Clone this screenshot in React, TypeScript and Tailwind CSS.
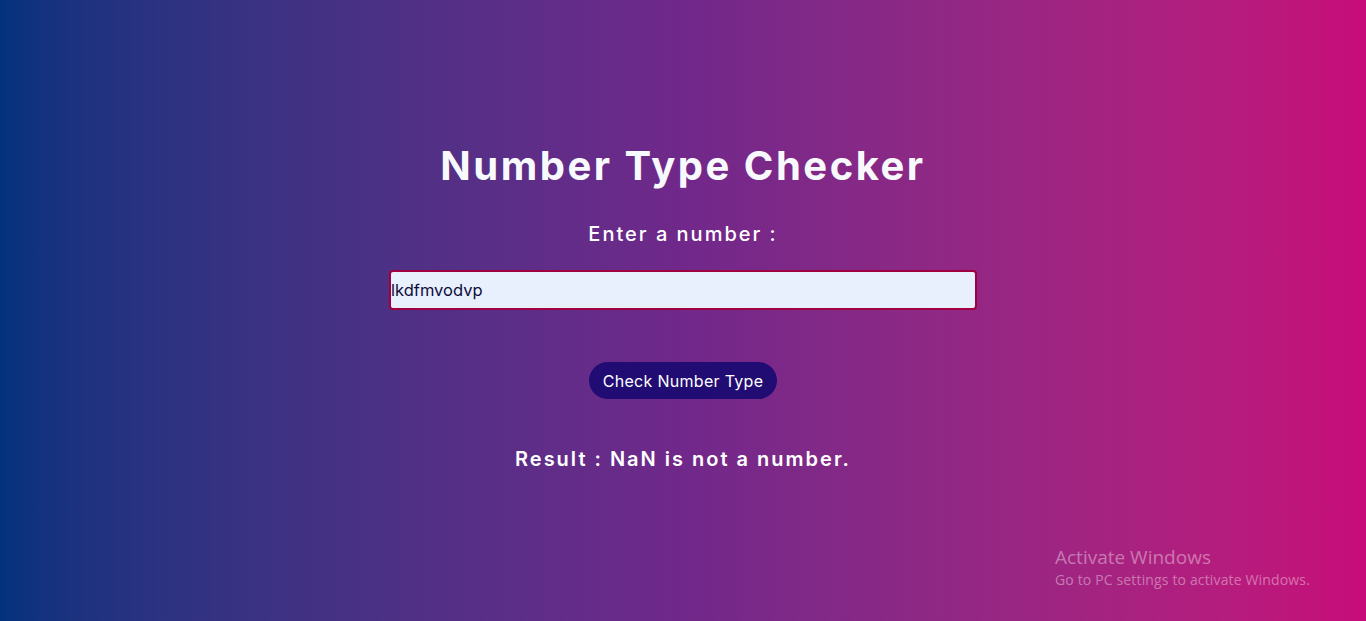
import { useState } from "react";

export default function App() {
  const [value, setValue] = useState("lkdfmvodvp");
  const [result, setResult] = useState("NaN is not a number.");

  const check = () => {
    const n = Number(value);
    if (value.trim() === "" || Number.isNaN(n)) {
      setResult("NaN is not a number.");
    } else if (Number.isInteger(n)) {
      setResult(`${n} is an integer.`);
    } else {
      setResult(`${n} is a decimal number.`);
    }
  };

  return (
    <main className="relative flex min-h-[621px] flex-col items-center bg-gradient-to-r from-[#03327e] via-[#70288a] to-[#c70b79] font-['Inter','Noto_Sans',sans-serif] text-white">
      <h1 className="mt-[142px] text-[40px] font-bold leading-[48px] tracking-[2.5px] text-[#f8f9fc]">
        Number Type Checker
      </h1>

      <label htmlFor="num" className="mt-[30px] text-[20px] font-medium leading-[28px] tracking-[2px]">
        Enter a number :
      </label>

      <input
        id="num"
        value={value}
        onChange={(e) => setValue(e.target.value)}
        className="mt-[22px] h-[40px] w-[588px] rounded-[4px] border-2 border-[#a0003f] bg-[#e8f0fe] px-0 text-[16.5px] text-[#0d0c3a] outline-none"
      />

      <button
        onClick={check}
        className="mt-[52px] h-[37px] w-[188px] rounded-full bg-[#210c74] text-[16px] tracking-[0.3px] text-white"
      >
        Check Number Type
      </button>

      <p className="mt-[46px] text-[20px] font-semibold leading-[28px] tracking-[2px]">
        Result : {result}
      </p>

      <div className="absolute left-[1055px] top-[545px] font-['Open_Sans',sans-serif] text-white/40">
        <p className="text-[19px] leading-[24px]">Activate Windows</p>
        <p className="text-[14px] leading-[21px] tracking-[0.15px]">Go to PC settings to activate Windows.</p>
      </div>
    </main>
  );
}
